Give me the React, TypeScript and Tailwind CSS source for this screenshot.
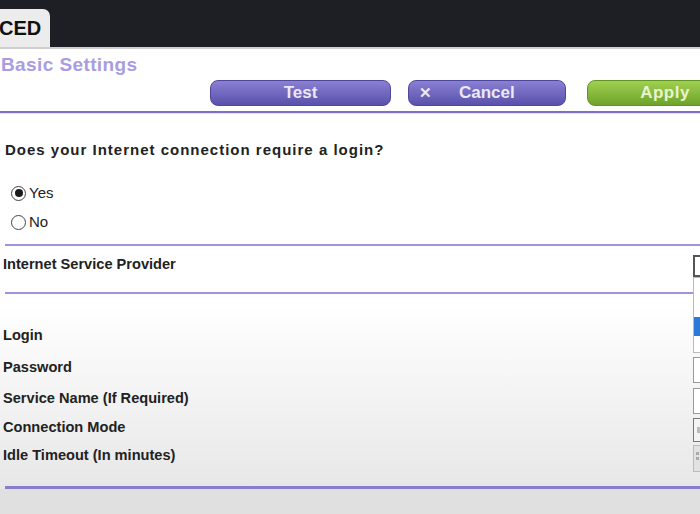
import React from "react";

const font = { fontFamily: '"Liberation Sans", Arial, sans-serif' };

function Radio({ checked }: { checked?: boolean }) {
  return (
    <span className="flex h-[15px] w-[15px] items-center justify-center rounded-full border border-[#444] bg-white">
      {checked && <span className="h-[8px] w-[8px] rounded-full bg-[#1a1a1a]" />}
    </span>
  );
}

function Row({ label, h, children }: { label: string; h: string; children?: React.ReactNode }) {
  return (
    <div className={`grid grid-cols-[693px_200px] items-center ${h}`}>
      <span className="mb-[7px] pl-[3px] text-[14.6px] font-bold leading-[18px] text-[#222]">{label}</span>
      <div className="flex h-full items-center">{children}</div>
    </div>
  );
}

export default function App() {
  return (
    <div className="relative h-[514px] w-[700px] overflow-hidden bg-white" style={font}>
      {/* header */}
      <div className="flex h-[47px] items-end bg-[#1e1f24]">
        <div className="flex h-[38px] w-[50px] items-center rounded-tr-[7px] bg-[#ececec]">
          <span className="-ml-[1px] text-[20px] font-bold leading-none text-[#111]">CED</span>
        </div>
      </div>
      <div className="h-[2px] bg-[#cfcfcf]" />

      <div className="flex h-[465px] flex-col bg-gradient-to-b from-white from-[55%] to-[#e4e4e4]">
        <div className="pl-[1px] pt-[5px] text-[19px] font-bold leading-[22px] tracking-[0.4px] text-[#a99ce2]">
          Basic Settings
        </div>
        <div className="mt-[4px] flex h-[26px] pl-[210px]">
          <div className="flex h-[26px] w-[181px] shrink-0 items-center justify-center rounded-[8px] border border-[#4f479c] bg-gradient-to-b from-[#8a80d4] to-[#5a51aa] text-[17px] font-bold text-[#ebe9f7]">
            Test
          </div>
          <div className="ml-[17px] flex h-[26px] w-[158px] shrink-0 items-center rounded-[8px] border border-[#4f479c] bg-gradient-to-b from-[#8a80d4] to-[#5a51aa] text-[17px] font-bold text-[#ebe9f7]">
            <span className="ml-[10px] w-[40px] text-[15px]">✕</span>
            <span className="ml-[0px]">Cancel</span>
          </div>
          <div className="ml-[21px] flex h-[26px] w-[156px] shrink-0 items-center justify-center rounded-[8px] border border-[#5f9324] bg-gradient-to-b from-[#a0d050] to-[#6ea32a] text-[17px] font-bold tracking-[0.5px] text-[#e6f4cc]">
            Apply
          </div>
        </div>
        <div className="mt-[5px] h-[2px] bg-[#7a70c9]" />
        <div className="h-[1px] bg-[#e4e1f3]" />

        <div className="mt-[26px] pl-[5px] text-[15px] font-bold leading-[20px] tracking-[1px] text-[#222]">
          Does your Internet connection require a login?
        </div>
        <div className="mt-[23px] flex h-[20px] items-center pl-[11px]">
          <Radio checked />
          <span className="ml-[3px] text-[15px] text-[#222]">Yes</span>
        </div>
        <div className="mt-[9px] flex h-[20px] items-center pl-[11px]">
          <Radio />
          <span className="ml-[3px] text-[15px] text-[#222]">No</span>
        </div>
        <div className="ml-[5px] mt-[12px] h-[2px] bg-[#a690dc]" />

        <div className="mt-[8px] grid h-[22px] grid-cols-[693px_200px] items-start">
          <span className="pl-[3px] text-[14.6px] font-bold leading-[20px] text-[#222]">Internet Service Provider</span>
          <div className="mt-[1px] h-[22px] w-[200px] border-2 border-[#555] bg-white" />
        </div>
        <div className="ml-[5px] mt-[16px] h-[2px] bg-[#a690dc]" />

        <div className="mt-[29px] flex flex-col">
          <Row label="Login" h="h-[31px]">
            <div className="h-[26px] w-[200px] border border-[#999] bg-white" />
          </Row>
          <Row label="Password" h="h-[32px]">
            <div className="h-[26px] w-[200px] border border-[#999] bg-white" />
          </Row>
          <Row label="Service Name (If Required)" h="h-[30px]">
            <div className="h-[26px] w-[200px] border border-[#999] bg-white" />
          </Row>
          <Row label="Connection Mode" h="h-[28px]">
            <div className="flex h-[24px] w-[200px] items-center border border-[#777] bg-[#f4f4f4] pl-[3px]">
              <span className="h-[6px] w-[3px] bg-[#bbb]" />
            </div>
          </Row>
          <Row label="Idle Timeout (In minutes)" h="h-[28px]">
            <div className="flex h-[27px] w-[200px] flex-col gap-[2px] border border-[#bbb] bg-[#e2e2e2] pl-[2px] pt-[6px]">
              <span className="h-[3px] w-[3px] bg-[#aaa]" />
              <span className="h-[3px] w-[3px] bg-[#aaa]" />
            </div>
          </Row>
        </div>
        <div className="ml-[5px] mt-[14px] h-[3px] bg-[#8a7dd0]" />
        <div className="flex-1 bg-[#e0e0e0]" />
      </div>

      {/* open dropdown list overlay */}
      <div className="absolute left-[693px] top-[277px] flex h-[76px] w-[200px] flex-col border border-[#bbb] bg-white">
        <div className="h-[20px]" />
        <div className="h-[19px]" />
        <div className="h-[19px] bg-[#2b7ad8]" />
        <div className="flex-1" />
      </div>
    </div>
  );
}
